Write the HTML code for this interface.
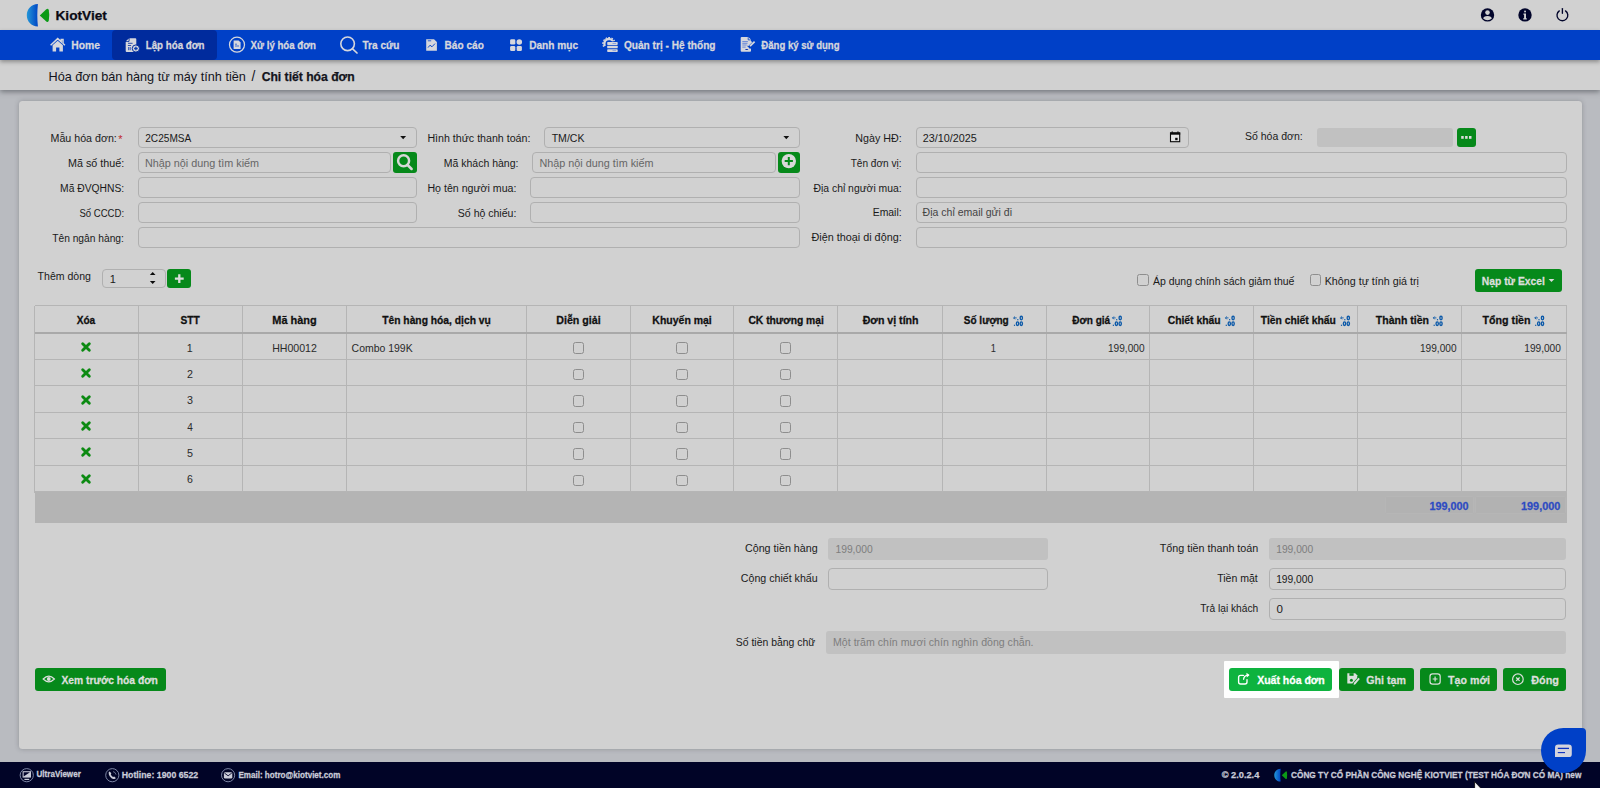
<!DOCTYPE html>
<html lang="vi">
<head>
<meta charset="utf-8">
<title>KiotViet</title>
<style>
*{box-sizing:border-box;margin:0;padding:0}
html,body{width:1600px;height:788px;overflow:hidden}
body{background:#b9bbc0;font-family:"Liberation Sans",sans-serif;font-size:11px;color:#1a1a1a;position:relative}
.a{position:absolute}
#top{left:0;top:0;width:1600px;height:30px;background:#d1d1d1}
#nav{left:0;top:30px;width:1600px;height:30px;background:#0040c7;box-shadow:0 1.5px 4px rgba(30,30,30,.38);z-index:2}
#act{left:112px;top:30px;width:104.5px;height:30px;background:#002b9d;border-radius:4px;z-index:2}
#bc{left:0;top:60px;width:1600px;height:30px;background:#d1d1d1;box-shadow:0 2px 5px rgba(50,54,60,.5)}
#card{left:18.6px;top:100.6px;width:1563.5px;height:648px;background:#d1d1d1;border-radius:3.5px;box-shadow:0 0 5px rgba(40,44,52,.28)}
#foot{left:0;top:762px;width:1600px;height:26px;background:#010427}
.t{position:absolute;white-space:pre;line-height:1;z-index:3}
.inp{position:absolute;height:20px;border:1px solid #b0b0b0;border-radius:4px;background:#d1d1d1}
.dis{position:absolute;border-radius:3px;background:#c1c1c1}
.g{position:absolute;background:#06891a;border-radius:3px}
.cb{position:absolute;width:11.5px;height:11.5px;border:1px solid #8e8e8e;border-radius:2.5px;background:#d1d1d1}
.vl{position:absolute;width:1px;background:#b5b5b5;top:305.5px;height:187px}
.hl{position:absolute;height:1px;background:#b5b5b5;left:34.5px;width:1532px}
svg{position:absolute;overflow:visible;z-index:3}
</style>
</head>
<body>
<div id="top" class="a"></div>
<div id="nav" class="a"></div>
<div id="act" class="a"></div>
<div id="bc" class="a"></div>
<div id="card" class="a"></div>
<div id="foot" class="a"></div>
<div class="inp" style="left:138.25px;top:127.00px;width:278.25px;height:21.00px;"></div>
<div class="inp" style="left:138.25px;top:152.00px;width:252.75px;height:21.00px;"></div>
<div class="inp" style="left:138.25px;top:177.00px;width:278.25px;height:21.00px;"></div>
<div class="inp" style="left:138.25px;top:202.00px;width:278.25px;height:21.00px;"></div>
<div class="inp" style="left:138.25px;top:227.00px;width:661.50px;height:21.00px;"></div>
<div class="inp" style="left:544.25px;top:127.00px;width:255.50px;height:21.00px;"></div>
<div class="inp" style="left:532.25px;top:152.00px;width:243.25px;height:21.00px;"></div>
<div class="inp" style="left:530.25px;top:177.00px;width:269.50px;height:21.00px;"></div>
<div class="inp" style="left:530.25px;top:202.00px;width:269.50px;height:21.00px;"></div>
<div class="inp" style="left:916.25px;top:127.00px;width:272.50px;height:21.00px;"></div>
<div class="inp" style="left:916.25px;top:152.00px;width:650.35px;height:21.00px;"></div>
<div class="inp" style="left:916.25px;top:177.00px;width:650.35px;height:21.00px;"></div>
<div class="inp" style="left:916.25px;top:202.00px;width:650.35px;height:21.00px;"></div>
<div class="inp" style="left:916.25px;top:227.00px;width:650.35px;height:21.00px;"></div>
<div class="dis" style="left:1316.90px;top:127.90px;width:136.30px;height:19.30px;"></div>
<div class="g" style="left:392.75px;top:152.00px;width:23.75px;height:20.50px;"></div>
<div class="g" style="left:777.75px;top:152.00px;width:22.00px;height:20.50px;"></div>
<div class="g" style="left:1456.80px;top:128.00px;width:19.70px;height:18.70px;"></div>
<div class="inp" style="left:102.20px;top:268.50px;width:64.00px;height:19.80px;"></div>
<div class="g" style="left:166.80px;top:268.70px;width:24.50px;height:19.50px;"></div>
<div class="g" style="left:1475.00px;top:268.80px;width:87.30px;height:23.30px;"></div>
<div class="cb" style="left:1137.3px;top:274.2px"></div>
<div class="cb" style="left:1309.5px;top:274.2px"></div>
<div class="a" style="left:34.5px;top:492px;width:1532px;height:30.5px;background:#b4b4b4"></div>
<div class="a" style="left:1384.7px;top:495.8px;width:89.3px;height:18.6px;background:#b2b2b2;border:1px solid #b6b6b6;border-radius:2px"></div>
<div class="a" style="left:1475.2px;top:495.8px;width:91px;height:18.6px;background:#b2b2b2;border:1px solid #b6b6b6;border-radius:2px"></div>
<div class="vl" style="left:34.00px"></div>
<div class="vl" style="left:137.90px"></div>
<div class="vl" style="left:241.80px"></div>
<div class="vl" style="left:345.70px"></div>
<div class="vl" style="left:526.00px"></div>
<div class="vl" style="left:629.70px"></div>
<div class="vl" style="left:733.30px"></div>
<div class="vl" style="left:837.10px"></div>
<div class="vl" style="left:941.70px"></div>
<div class="vl" style="left:1045.90px"></div>
<div class="vl" style="left:1149.30px"></div>
<div class="vl" style="left:1252.90px"></div>
<div class="vl" style="left:1356.90px"></div>
<div class="vl" style="left:1460.90px"></div>
<div class="vl" style="left:1565.70px"></div>
<div class="hl" style="top:305px"></div>
<div class="hl" style="top:331.5px;height:2px;background:#a9a9a9"></div>
<div class="hl" style="top:358.70px"></div>
<div class="hl" style="top:385.10px"></div>
<div class="hl" style="top:411.60px"></div>
<div class="hl" style="top:438.00px"></div>
<div class="hl" style="top:464.50px"></div>
<div class="hl" style="top:491.00px"></div>
<div class="cb" style="left:572.55px;top:342.25px"></div>
<div class="cb" style="left:676.25px;top:342.25px"></div>
<div class="cb" style="left:779.95px;top:342.25px"></div>
<svg style="left:81.40px;top:341.75px" width="10" height="10" viewBox="0 0 10 10"><path d="M1.7 1.8L8.3 8.2M8.3 1.8L1.7 8.2" stroke="#0c8a12" stroke-width="2.9" stroke-linecap="round"/></svg>
<div class="cb" style="left:572.55px;top:368.75px"></div>
<div class="cb" style="left:676.25px;top:368.75px"></div>
<div class="cb" style="left:779.95px;top:368.75px"></div>
<svg style="left:81.40px;top:368.15px" width="10" height="10" viewBox="0 0 10 10"><path d="M1.7 1.8L8.3 8.2M8.3 1.8L1.7 8.2" stroke="#0c8a12" stroke-width="2.9" stroke-linecap="round"/></svg>
<div class="cb" style="left:572.55px;top:395.25px"></div>
<div class="cb" style="left:676.25px;top:395.25px"></div>
<div class="cb" style="left:779.95px;top:395.25px"></div>
<svg style="left:81.40px;top:394.55px" width="10" height="10" viewBox="0 0 10 10"><path d="M1.7 1.8L8.3 8.2M8.3 1.8L1.7 8.2" stroke="#0c8a12" stroke-width="2.9" stroke-linecap="round"/></svg>
<div class="cb" style="left:572.55px;top:421.75px"></div>
<div class="cb" style="left:676.25px;top:421.75px"></div>
<div class="cb" style="left:779.95px;top:421.75px"></div>
<svg style="left:81.40px;top:420.95px" width="10" height="10" viewBox="0 0 10 10"><path d="M1.7 1.8L8.3 8.2M8.3 1.8L1.7 8.2" stroke="#0c8a12" stroke-width="2.9" stroke-linecap="round"/></svg>
<div class="cb" style="left:572.55px;top:448.25px"></div>
<div class="cb" style="left:676.25px;top:448.25px"></div>
<div class="cb" style="left:779.95px;top:448.25px"></div>
<svg style="left:81.40px;top:447.35px" width="10" height="10" viewBox="0 0 10 10"><path d="M1.7 1.8L8.3 8.2M8.3 1.8L1.7 8.2" stroke="#0c8a12" stroke-width="2.9" stroke-linecap="round"/></svg>
<div class="cb" style="left:572.55px;top:474.75px"></div>
<div class="cb" style="left:676.25px;top:474.75px"></div>
<div class="cb" style="left:779.95px;top:474.75px"></div>
<svg style="left:81.40px;top:473.75px" width="10" height="10" viewBox="0 0 10 10"><path d="M1.7 1.8L8.3 8.2M8.3 1.8L1.7 8.2" stroke="#0c8a12" stroke-width="2.9" stroke-linecap="round"/></svg>
<div class="dis" style="left:828.40px;top:538.00px;width:219.80px;height:21.80px;"></div>
<div class="inp" style="left:828.40px;top:568.20px;width:219.80px;height:21.60px;"></div>
<div class="dis" style="left:1269.30px;top:538.00px;width:296.60px;height:22.00px;"></div>
<div class="inp" style="left:1269.30px;top:568.20px;width:296.60px;height:21.80px;"></div>
<div class="inp" style="left:1269.30px;top:598.20px;width:296.60px;height:21.80px;"></div>
<div class="dis" style="left:826.00px;top:631.20px;width:740.00px;height:22.40px;"></div>
<div class="g" style="left:34.50px;top:668.30px;width:131.00px;height:22.70px;"></div>
<div class="a" style="left:1223.5px;top:660.7px;width:115px;height:37.6px;background:#fefefe;border-radius:1px"></div>
<div class="g" style="left:1229.30px;top:668.30px;width:102.70px;height:22.70px;background:#0eb33f"></div>
<div class="g" style="left:1338.80px;top:668.30px;width:75.00px;height:22.70px;"></div>
<div class="g" style="left:1420.20px;top:668.30px;width:77.10px;height:22.70px;"></div>
<div class="g" style="left:1503.40px;top:668.30px;width:63.00px;height:22.70px;"></div>
<!-- logo -->
<svg style="left:0;top:0" width="60" height="30" viewBox="0 0 60 30">
<defs><linearGradient id="lg" x1="0" x2="1" y1="0" y2="0"><stop offset="0" stop-color="#2397d8"/><stop offset="1" stop-color="#0046c4"/></linearGradient></defs>
<path d="M37.9 4.1C31.2 4.3 26.8 9.2 26.8 15.3C26.8 21.4 31.2 26.3 37.9 26.5C37.5 22.6 37.3 19 37.3 15.3C37.3 11.6 37.5 8 37.9 4.1Z" fill="url(#lg)"/>
<path d="M39.8 15.4L46.3 9.3Q48.2 7.8 48.8 10.2Q49.8 15.4 48.8 20.6Q48.2 23 46.3 21.5Z" fill="#0b9a16"/>
</svg>
<!-- top right icons -->
<svg style="left:1478px;top:5px" width="100" height="20" viewBox="1478 5 100 20">
<circle cx="1487.5" cy="14.9" r="6.7" fill="#02052b"/>
<circle cx="1487.5" cy="12.6" r="2.3" fill="#d1d1d1"/>
<path d="M1483.2 18.4Q1483.4 15.9 1487.5 15.9Q1491.6 15.9 1491.8 18.4Q1490 20.2 1487.5 20.2Q1485 20.2 1483.2 18.4Z" fill="#d1d1d1"/>
<circle cx="1525" cy="14.9" r="6.7" fill="#02052b"/>
<rect x="1524.1" y="10.5" width="1.9" height="1.9" rx=".9" fill="#d1d1d1"/>
<path d="M1523.4 13.6h2.6v4.6h.8v1.2h-3.6v-1.2h.9v-3.4h-.7z" fill="#d1d1d1"/>
<path d="M1559.3 10.9A5.4 5.4 0 1 0 1565.5 10.9" fill="none" stroke="#02052b" stroke-width="1.35" stroke-linecap="round"/>
<path d="M1562.4 8.6V13.2" stroke="#02052b" stroke-width="1.35" stroke-linecap="round"/>
</svg>
<!-- nav icons -->
<svg style="left:0;top:30px" width="860" height="30" viewBox="0 30 860 30" fill="#d6d7dd">
<!-- home -->
<path d="M50.6 45.2L57.7 38.6L61.2 41.8V39.6H63V43.5L64.9 45.2" fill="none" stroke="#d6d7dd" stroke-width="1.5" stroke-linejoin="miter"/>
<path d="M52.6 45.3L57.7 40.7L62.9 45.3V51.6H59.4V47.6H56.1V51.6H52.6Z"/>
<!-- lap hoa don -->
<path d="M129.5 38.2H135.3Q136.3 38.2 136.3 39.2V51.9H126.7Q125.7 51.9 125.7 50.9V42H128Q129.5 42 129.5 40.5Z"/>
<path d="M125.9 41.2L128.7 38.4V40.4Q128.7 41.2 127.9 41.2Z"/>
<path d="M128 43.3h4.6M127.9 45.5h3.2" stroke="#002b9d" stroke-width=".8" fill="none"/>
<rect x="128" y="47" width="1.5" height="3.2" fill="#4a68bd"/><rect x="130.2" y="47" width=".9" height="3.2" fill="#4a68bd"/>
<circle cx="135.9" cy="48.5" r="3.6" fill="#d6d7dd" stroke="#002b9d" stroke-width="1"/>
<path d="M135.9 46.7v3.6M134.1 48.5h3.6" stroke="#0a3cb0" stroke-width="1.3"/>
<!-- xu ly -->
<circle cx="237" cy="44.7" r="7.5" fill="none" stroke="#d6d7dd" stroke-width="1.25"/>
<path d="M233.6 40.6H238.6L240.6 42.6V49H233.6Z"/>
<path d="M235 44.2h2M235 46h4" stroke="#0040c7" stroke-width=".7"/>
<!-- tra cuu -->
<circle cx="347.6" cy="43.8" r="6.8" fill="none" stroke="#d6d7dd" stroke-width="1.6"/>
<path d="M352.6 48.8L357 53" stroke="#d6d7dd" stroke-width="1.7" stroke-linecap="round"/>
<!-- bao cao -->
<path d="M426.2 39.2H434L436.9 42.1V50.8H426.2Z"/>
<path d="M428 47.6L430 45.2L432 46.8L435 43.6" fill="none" stroke="#0040c7" stroke-width=".9"/>
<path d="M427.8 40.8h3.4" stroke="#0040c7" stroke-width=".8"/>
<!-- danh muc -->
<rect x="510.1" y="39.3" width="5.2" height="5.2" rx="1.3"/>
<circle cx="519.3" cy="41.9" r="2.75"/>
<rect x="510.1" y="45.9" width="5.2" height="5.2" rx="1.3"/>
<rect x="516.7" y="45.9" width="5.2" height="5.2" rx="1.3"/>
<!-- quan tri -->
<path d="M604.93 46.05A4.7 4.7 0 1 1 613.26 41.71" fill="none" stroke="#d6d7dd" stroke-width="2.3"/>
<path d="M603.72 46.75A6.1 6.1 0 1 1 614.53 41.12" fill="none" stroke="#d6d7dd" stroke-width="1.3" stroke-dasharray="1.7 1.25"/>
<rect x="606.4" y="41.4" width="12" height="11.2" fill="#0040c7"/>
<rect x="607.2" y="42.1" width="10.5" height="2.8" rx=".7"/>
<rect x="607.2" y="45.8" width="10.5" height="2.5" rx=".5"/>
<rect x="607.2" y="49.2" width="10.5" height="2.7" rx=".7"/>
<path d="M612.5 43.5h3.6M612.5 50.6h3.6" stroke="#6f8fdc" stroke-width=".7"/>
<!-- dang ky -->
<path d="M741.7 36.9H748.3L751 39.6V50.7Q751 51.7 750 51.7H741.7Q740.7 51.7 740.7 50.7V37.9Q740.7 36.9 741.7 36.9Z"/>
<path d="M748.2 37.2V39.9H750.8" fill="none" stroke="#0040c7" stroke-width=".8"/>
<path d="M742.3 41.6h5.6M742.3 43.3h5.2M742.3 45h4.4M742.3 47.1h3.4" stroke="#6888d8" stroke-width="1"/>
<ellipse cx="746.7" cy="49.5" rx="1.6" ry=".55" fill="#0a2fb0"/>
<path d="M755 41.3L748.6 47.6" stroke="#0040c7" stroke-width="4.2"/>
<path d="M754.6 41.6L750 46.2" stroke="#d6d7dd" stroke-width="1.7"/>
<path d="M751.6 41.6L747.6 45.6" stroke="#d6d7dd" stroke-width="1.5"/>
</svg>
<!-- carets, calendar, spinner -->
<svg style="left:0;top:120px" width="1600" height="180" viewBox="0 120 1600 180">
<path d="M400.2 136H406.1L403.15 139.2Z" fill="#111"/>
<path d="M783.4 136H789.2L786.3 139.2Z" fill="#111"/>
<rect x="1170.5" y="133" width="9.2" height="8.7" fill="#e4e4e4" stroke="#0a0a0a" stroke-width="1.1"/>
<rect x="1170" y="132.4" width="10.2" height="2.3" fill="#0a0a0a"/>
<rect x="1171.6" y="131.5" width="1.3" height="1.2" fill="#0a0a0a"/><rect x="1177.3" y="131.5" width="1.3" height="1.2" fill="#0a0a0a"/>
<rect x="1175.2" y="137.8" width="2.4" height="2.4" fill="#0a0a0a"/>
<path d="M149.9 275.1H155.5L152.7 272.1Z" fill="#0a0a0a"/>
<path d="M149.9 281H155.5L152.7 283.9Z" fill="#0a0a0a"/>
<!-- search btn -->
<circle cx="403.6" cy="160.8" r="5.5" fill="none" stroke="#d8d8d8" stroke-width="2.5"/>
<path d="M407.6 165L411.6 169" stroke="#d8d8d8" stroke-width="2.5" stroke-linecap="round"/>
<!-- plus circle btn -->
<circle cx="788.8" cy="161.1" r="7.2" fill="#d8d8d8"/>
<path d="M788.8 157v8.2M784.7 161.1h8.2" stroke="#06891a" stroke-width="2"/>
<!-- ... btn -->
<rect x="1461.2" y="136" width="2.5" height="2.8" fill="#dcdcdc"/><rect x="1465.1" y="136" width="2.5" height="2.8" fill="#dcdcdc"/><rect x="1469" y="136" width="2.5" height="2.8" fill="#dcdcdc"/>
<!-- plus btn -->
<path d="M179.3 274.2v8.8M174.9 278.6h8.8" stroke="#dcdcdc" stroke-width="2.3"/>
<!-- excel caret -->
<path d="M1548.6 279H1554.4L1551.5 282Z" fill="#dcdcdc"/>
</svg>
<!-- decimal icons -->
<svg style="left:0;top:310px" width="1600" height="20" viewBox="0 310 1600 20">

<g fill="none" stroke="#0a58a8" transform="translate(1013.4 315.6)">
<path d="M0.2 2.3H3.3M1.6 0.9L0.2 2.3L1.6 3.7" stroke-width=".9"/>
<rect x="3.8" y="3.5" width="1.2" height="1.2" fill="#0a58a8" stroke="none"/>
<ellipse cx="7.9" cy="2.4" rx="1.15" ry="1.8" stroke-width="1.35"/>
<rect x="0.5" y="9.1" width="1.2" height="1.2" fill="#0a58a8" stroke="none"/>
<ellipse cx="4.1" cy="8.1" rx="1.15" ry="1.8" stroke-width="1.35"/>
<ellipse cx="7.9" cy="8.1" rx="1.15" ry="1.8" stroke-width="1.35"/>
</g>
<g fill="none" stroke="#0a58a8" transform="translate(1112.3 315.6)">
<path d="M0.2 2.3H3.3M1.6 0.9L0.2 2.3L1.6 3.7" stroke-width=".9"/>
<rect x="3.8" y="3.5" width="1.2" height="1.2" fill="#0a58a8" stroke="none"/>
<ellipse cx="7.9" cy="2.4" rx="1.15" ry="1.8" stroke-width="1.35"/>
<rect x="0.5" y="9.1" width="1.2" height="1.2" fill="#0a58a8" stroke="none"/>
<ellipse cx="4.1" cy="8.1" rx="1.15" ry="1.8" stroke-width="1.35"/>
<ellipse cx="7.9" cy="8.1" rx="1.15" ry="1.8" stroke-width="1.35"/>
</g>
<g fill="none" stroke="#0a58a8" transform="translate(1225.2 315.6)">
<path d="M0.2 2.3H3.3M1.6 0.9L0.2 2.3L1.6 3.7" stroke-width=".9"/>
<rect x="3.8" y="3.5" width="1.2" height="1.2" fill="#0a58a8" stroke="none"/>
<ellipse cx="7.9" cy="2.4" rx="1.15" ry="1.8" stroke-width="1.35"/>
<rect x="0.5" y="9.1" width="1.2" height="1.2" fill="#0a58a8" stroke="none"/>
<ellipse cx="4.1" cy="8.1" rx="1.15" ry="1.8" stroke-width="1.35"/>
<ellipse cx="7.9" cy="8.1" rx="1.15" ry="1.8" stroke-width="1.35"/>
</g>
<g fill="none" stroke="#0a58a8" transform="translate(1340.4 315.6)">
<path d="M0.2 2.3H3.3M1.6 0.9L0.2 2.3L1.6 3.7" stroke-width=".9"/>
<rect x="3.8" y="3.5" width="1.2" height="1.2" fill="#0a58a8" stroke="none"/>
<ellipse cx="7.9" cy="2.4" rx="1.15" ry="1.8" stroke-width="1.35"/>
<rect x="0.5" y="9.1" width="1.2" height="1.2" fill="#0a58a8" stroke="none"/>
<ellipse cx="4.1" cy="8.1" rx="1.15" ry="1.8" stroke-width="1.35"/>
<ellipse cx="7.9" cy="8.1" rx="1.15" ry="1.8" stroke-width="1.35"/>
</g>
<g fill="none" stroke="#0a58a8" transform="translate(1433.1 315.6)">
<path d="M0.2 2.3H3.3M1.6 0.9L0.2 2.3L1.6 3.7" stroke-width=".9"/>
<rect x="3.8" y="3.5" width="1.2" height="1.2" fill="#0a58a8" stroke="none"/>
<ellipse cx="7.9" cy="2.4" rx="1.15" ry="1.8" stroke-width="1.35"/>
<rect x="0.5" y="9.1" width="1.2" height="1.2" fill="#0a58a8" stroke="none"/>
<ellipse cx="4.1" cy="8.1" rx="1.15" ry="1.8" stroke-width="1.35"/>
<ellipse cx="7.9" cy="8.1" rx="1.15" ry="1.8" stroke-width="1.35"/>
</g>
<g fill="none" stroke="#0a58a8" transform="translate(1534.6 315.6)">
<path d="M0.2 2.3H3.3M1.6 0.9L0.2 2.3L1.6 3.7" stroke-width=".9"/>
<rect x="3.8" y="3.5" width="1.2" height="1.2" fill="#0a58a8" stroke="none"/>
<ellipse cx="7.9" cy="2.4" rx="1.15" ry="1.8" stroke-width="1.35"/>
<rect x="0.5" y="9.1" width="1.2" height="1.2" fill="#0a58a8" stroke="none"/>
<ellipse cx="4.1" cy="8.1" rx="1.15" ry="1.8" stroke-width="1.35"/>
<ellipse cx="7.9" cy="8.1" rx="1.15" ry="1.8" stroke-width="1.35"/>
</g>
</svg>
<!-- button icons -->
<svg style="left:0;top:665px" width="1600" height="30" viewBox="0 665 1600 30" fill="none">
<!-- eye -->
<path d="M43.2 679Q48.8 673.4 54.4 679Q48.8 684.6 43.2 679Z" stroke="#dcdfdc" stroke-width="1.25"/>
<circle cx="48.8" cy="679" r="1.9" fill="#dcdfdc"/>
<!-- xuat -->
<path d="M1243.4 675.4H1240.6Q1238.6 675.4 1238.6 677.4V682Q1238.6 684 1240.6 684H1245Q1247 684 1247 682V679.6" stroke="#fff" stroke-width="1.35" stroke-linecap="round"/>
<path d="M1243.6 679.2Q1244 675.6 1248.2 675.2" stroke="#fff" stroke-width="1.35" stroke-linecap="round"/>
<path d="M1246.4 672.8L1249.6 675L1246.8 677.6Z" fill="#fff"/>
<!-- ghi tam -->
<path d="M1347.3 673.2H1355.2L1357.2 675.2V678L1352.4 683.6H1347.3Z" fill="#dcdfdc"/>
<rect x="1349.4" y="673.2" width="4.2" height="2.6" fill="#06891a"/>
<circle cx="1351.4" cy="680.2" r="1.5" fill="#06891a"/>
<path d="M1353.6 684.9L1354 682.8L1358.4 677.8L1359.8 679L1355.4 684.2Z" fill="#dcdfdc"/>
<!-- tao moi -->
<rect x="1430" y="673.9" width="10.2" height="10.2" rx="2.6" stroke="#dcdfdc" stroke-width="1.2"/>
<path d="M1435.1 676.6v4.8M1432.7 679h4.8" stroke="#dcdfdc" stroke-width="1.2"/>
<!-- dong -->
<circle cx="1517.9" cy="679.2" r="5.3" stroke="#dcdfdc" stroke-width="1.2"/>
<path d="M1516.2 677.5l3.4 3.4M1519.6 677.5l-3.4 3.4" stroke="#dcdfdc" stroke-width="1.3"/>
</svg>
<!-- footer icons -->
<svg style="left:0;top:762px" width="1600" height="26" viewBox="0 762 1600 26" fill="none">
<g stroke="#7d86a5" stroke-width="1">
<circle cx="26.75" cy="775.2" r="6.6"/><circle cx="112.3" cy="775.2" r="6.6"/><circle cx="228.1" cy="775.2" r="6.6"/>
</g>
<path d="M22.6 771.2H31V777.6H22.6Z" fill="#c9cbd8"/><path d="M23.6 776.6L30 772.2H23.6Z" fill="#02032a"/><path d="M24.4 779.4H29.2" stroke="#c9cbd8" stroke-width="1.2"/>
<path d="M109.6 771.6Q108.2 772 108.8 774.2Q110 778 113.4 779Q115.4 779.4 115.8 778L114.2 776.4L113 777Q111.2 776 110.8 774.2L111.4 773.2Z" fill="#c9cbd8"/>
<path d="M113 771.6Q115.6 772 116 774.6" stroke="#7d86a5" stroke-width=".8"/>
<rect x="223.9" y="772.2" width="8.4" height="6.2" rx="1.2" fill="#c9cbd8"/><path d="M224.4 773L228.1 775.8L231.8 773" stroke="#02032a" stroke-width=".9"/>
<g transform="translate(1258.85 766.35) scale(.575)">
<path d="M37.9 4.1C31.2 4.3 26.8 9.2 26.8 15.3C26.8 21.4 31.2 26.3 37.9 26.5C37.5 22.6 37.3 19 37.3 15.3C37.3 11.6 37.5 8 37.9 4.1Z" fill="url(#lg)"/>
<path d="M39.8 15.4L46.3 9.3Q48.2 7.8 48.8 10.2Q49.8 15.4 48.8 20.6Q48.2 23 46.3 21.5Z" fill="#0b9a16"/>
</g>
</svg>

<span class="t" style="left:55.44px;top:9.46px;font-size:13.69px;color:#0a0a14;font-weight:700;-webkit-text-stroke:.25px;">KiotViet</span>
<span class="t" style="left:71.34px;top:40.52px;font-size:10.35px;color:#d6d7dd;font-weight:700;-webkit-text-stroke:.25px;transform:scaleY(1.053);">Home</span>
<span class="t" style="left:145.79px;top:40.84px;font-size:9.72px;color:#d6d7dd;font-weight:700;-webkit-text-stroke:.25px;transform:scaleY(1.122);">Lập hóa đơn</span>
<span class="t" style="left:250.60px;top:40.87px;font-size:9.67px;color:#d6d7dd;font-weight:700;-webkit-text-stroke:.25px;transform:scaleY(1.127);">Xử lý hóa đơn</span>
<span class="t" style="left:362.52px;top:40.66px;font-size:10.07px;color:#d6d7dd;font-weight:700;-webkit-text-stroke:.25px;transform:scaleY(1.082);">Tra cứu</span>
<span class="t" style="left:444.59px;top:40.65px;font-size:10.11px;color:#d6d7dd;font-weight:700;-webkit-text-stroke:.25px;transform:scaleY(1.079);">Báo cáo</span>
<span class="t" style="left:529.19px;top:40.64px;font-size:10.12px;color:#d6d7dd;font-weight:700;-webkit-text-stroke:.25px;transform:scaleY(1.077);">Danh mục</span>
<span class="t" style="left:623.89px;top:40.63px;font-size:10.13px;color:#d6d7dd;font-weight:700;-webkit-text-stroke:.25px;transform:scaleY(1.076);">Quản trị - Hệ thống</span>
<span class="t" style="left:761.30px;top:40.91px;font-size:9.59px;color:#d6d7dd;font-weight:700;-webkit-text-stroke:.25px;transform:scaleY(1.137);">Đăng ký sử dụng</span>
<span class="t" style="left:48.48px;top:71.45px;font-size:12.70px;color:#14141c;">Hóa đơn bán hàng từ máy tính tiền</span>
<span class="t" style="left:251.58px;top:69.93px;font-size:13.74px;color:#14141c;">/</span>
<span class="t" style="left:261.64px;top:70.72px;font-size:12.17px;color:#14141c;font-weight:700;-webkit-text-stroke:.25px;">Chi tiết hóa đơn</span>
<span class="t" style="left:50.55px;top:132.87px;font-size:10.66px;color:#1a1a1a;transform:scaleY(1.091);">Mẫu hóa đơn:</span>
<span class="t" style="left:118.37px;top:134.00px;font-size:11.00px;color:#c0282d;letter-spacing:2.077px;transform:scaleY(1.057);">*</span>
<span class="t" style="left:68.08px;top:157.63px;font-size:10.74px;color:#1a1a1a;transform:scaleY(1.083);">Mã số thuế:</span>
<span class="t" style="left:60.10px;top:183.85px;font-size:10.30px;color:#1a1a1a;transform:scaleY(1.129);">Mã ĐVQHNS:</span>
<span class="t" style="left:79.47px;top:208.22px;font-size:9.55px;color:#1a1a1a;transform:scaleY(1.217);">Số CCCD:</span>
<span class="t" style="left:52.19px;top:234.38px;font-size:10.24px;color:#1a1a1a;transform:scaleY(1.136);">Tên ngân hàng:</span>
<span class="t" style="left:145.25px;top:134.25px;font-size:10.10px;color:#1a1a1a;transform:scaleY(1.151);">2C25MSA</span>
<span class="t" style="left:144.93px;top:157.79px;font-size:10.82px;color:#666;transform:scaleY(1.074);">Nhập nội dung tìm kiếm</span>
<span class="t" style="left:427.45px;top:132.87px;font-size:10.65px;color:#1a1a1a;transform:scaleY(1.092);">Hình thức thanh toán:</span>
<span class="t" style="left:443.77px;top:158.75px;font-size:10.49px;color:#1a1a1a;transform:scaleY(1.108);">Mã khách hàng:</span>
<span class="t" style="left:427.45px;top:182.69px;font-size:10.62px;color:#1a1a1a;transform:scaleY(1.095);">Họ tên người mua:</span>
<span class="t" style="left:457.87px;top:207.73px;font-size:10.53px;color:#1a1a1a;transform:scaleY(1.104);">Số hộ chiếu:</span>
<span class="t" style="left:551.67px;top:133.02px;font-size:10.55px;color:#1a1a1a;transform:scaleY(1.102);">TM/CK</span>
<span class="t" style="left:539.44px;top:157.80px;font-size:10.81px;color:#666;transform:scaleY(1.076);">Nhập nội dung tìm kiếm</span>
<span class="t" style="left:855.34px;top:132.84px;font-size:10.71px;color:#1a1a1a;transform:scaleY(1.085);">Ngày HĐ:</span>
<span class="t" style="left:850.64px;top:158.94px;font-size:10.12px;color:#1a1a1a;transform:scaleY(1.149);">Tên đơn vị:</span>
<span class="t" style="left:813.52px;top:183.81px;font-size:10.38px;color:#1a1a1a;transform:scaleY(1.120);">Địa chỉ người mua:</span>
<span class="t" style="left:872.73px;top:208.29px;font-size:10.42px;color:#1a1a1a;transform:scaleY(1.116);">Email:</span>
<span class="t" style="left:811.51px;top:232.09px;font-size:10.82px;color:#1a1a1a;transform:scaleY(1.075);">Điện thoại di động:</span>
<span class="t" style="left:922.82px;top:132.90px;font-size:10.80px;color:#1a1a1a;transform:scaleY(1.076);">23/10/2025</span>
<span class="t" style="left:922.62px;top:207.24px;font-size:10.53px;color:#444;transform:scaleY(1.104);">Địa chỉ email gửi đi</span>
<span class="t" style="left:1244.97px;top:131.25px;font-size:10.50px;color:#1a1a1a;transform:scaleY(1.107);">Số hóa đơn:</span>
<span class="t" style="left:37.61px;top:271.22px;font-size:10.56px;color:#1a1a1a;transform:scaleY(1.101);">Thêm dòng</span>
<span class="t" style="left:109.64px;top:274.00px;font-size:11.00px;color:#1a1a1a;letter-spacing:-4.086px;transform:scaleY(1.057);">1</span>
<span class="t" style="left:1152.98px;top:276.96px;font-size:10.48px;color:#1a1a1a;transform:scaleY(1.109);">Áp dụng chính sách giảm thuế</span>
<span class="t" style="left:1324.67px;top:275.83px;font-size:10.74px;color:#1a1a1a;transform:scaleY(1.082);">Không tự tính giá trị</span>
<span class="t" style="left:1481.82px;top:276.64px;font-size:10.32px;color:#dcdfdc;font-weight:700;-webkit-text-stroke:.25px;transform:scaleY(1.127);">Nạp từ Excel</span>
<span class="t" style="left:76.74px;top:315.76px;font-size:10.09px;color:#101010;font-weight:700;-webkit-text-stroke:.25px;transform:scaleY(1.153);">Xóa</span>
<span class="t" style="left:180.55px;top:315.68px;font-size:10.23px;color:#101010;font-weight:700;-webkit-text-stroke:.25px;transform:scaleY(1.136);">STT</span>
<span class="t" style="left:272.33px;top:315.33px;font-size:10.94px;color:#101010;font-weight:700;-webkit-text-stroke:.25px;transform:scaleY(1.063);">Mã hàng</span>
<span class="t" style="left:382.24px;top:315.65px;font-size:10.29px;color:#101010;font-weight:700;-webkit-text-stroke:.25px;transform:scaleY(1.130);">Tên hàng hóa, dịch vụ</span>
<span class="t" style="left:556.28px;top:315.47px;font-size:10.66px;color:#101010;font-weight:700;-webkit-text-stroke:.25px;transform:scaleY(1.091);">Diễn giải</span>
<span class="t" style="left:652.36px;top:315.55px;font-size:10.49px;color:#101010;font-weight:700;-webkit-text-stroke:.25px;transform:scaleY(1.108);">Khuyến mại</span>
<span class="t" style="left:748.41px;top:315.64px;font-size:10.31px;color:#101010;font-weight:700;-webkit-text-stroke:.25px;transform:scaleY(1.127);">CK thương mại</span>
<span class="t" style="left:862.68px;top:315.49px;font-size:10.62px;color:#101010;font-weight:700;-webkit-text-stroke:.25px;transform:scaleY(1.095);">Đơn vị tính</span>
<span class="t" style="left:963.78px;top:315.79px;font-size:10.03px;color:#101010;font-weight:700;-webkit-text-stroke:.25px;transform:scaleY(1.160);">Số lượng</span>
<span class="t" style="left:1072.32px;top:315.77px;font-size:10.06px;color:#101010;font-weight:700;-webkit-text-stroke:.25px;transform:scaleY(1.156);">Đơn giá</span>
<span class="t" style="left:1167.71px;top:315.62px;font-size:10.35px;color:#101010;font-weight:700;-webkit-text-stroke:.25px;transform:scaleY(1.123);">Chiết khấu</span>
<span class="t" style="left:1260.79px;top:315.63px;font-size:10.34px;color:#101010;font-weight:700;-webkit-text-stroke:.25px;transform:scaleY(1.124);">Tiền chiết khấu</span>
<span class="t" style="left:1375.86px;top:314.54px;font-size:10.52px;color:#101010;font-weight:700;-webkit-text-stroke:.25px;transform:scaleY(1.106);">Thành tiền</span>
<span class="t" style="left:1482.60px;top:315.46px;font-size:10.67px;color:#101010;font-weight:700;-webkit-text-stroke:.25px;transform:scaleY(1.090);">Tổng tiền</span>
<span class="t" style="left:186.72px;top:343.24px;font-size:10.72px;color:#2a2a2a;transform:scaleY(1.085);">1</span>
<span class="t" style="left:187.02px;top:368.59px;font-size:10.72px;color:#2a2a2a;transform:scaleY(1.085);">2</span>
<span class="t" style="left:187.06px;top:394.94px;font-size:10.72px;color:#2a2a2a;transform:scaleY(1.085);">3</span>
<span class="t" style="left:187.32px;top:422.65px;font-size:10.01px;color:#2a2a2a;transform:scaleY(1.162);">4</span>
<span class="t" style="left:187.08px;top:447.64px;font-size:10.72px;color:#2a2a2a;transform:scaleY(1.085);">5</span>
<span class="t" style="left:187.12px;top:474.08px;font-size:10.54px;color:#2a2a2a;transform:scaleY(1.103);">6</span>
<span class="t" style="left:272.16px;top:343.30px;font-size:10.59px;color:#2a2a2a;transform:scaleY(1.098);">HH00012</span>
<span class="t" style="left:351.60px;top:344.37px;font-size:10.46px;color:#2a2a2a;transform:scaleY(1.112);">Combo 199K</span>
<span class="t" style="left:990.83px;top:343.96px;font-size:9.27px;color:#2a2a2a;transform:scaleY(1.250);">1</span>
<span class="t" style="left:1108.00px;top:343.54px;font-size:10.12px;color:#2a2a2a;transform:scaleY(1.148);">199,000</span>
<span class="t" style="left:1420.00px;top:343.54px;font-size:10.12px;color:#2a2a2a;transform:scaleY(1.148);">199,000</span>
<span class="t" style="left:1524.26px;top:343.54px;font-size:10.13px;color:#2a2a2a;transform:scaleY(1.148);">199,000</span>
<span class="t" style="left:1429.48px;top:500.78px;font-size:10.83px;color:#2d4bc2;font-weight:700;-webkit-text-stroke:.25px;transform:scaleY(1.033);">199,000</span>
<span class="t" style="left:1520.95px;top:500.73px;font-size:10.93px;color:#2d4bc2;font-weight:700;-webkit-text-stroke:.25px;transform:scaleY(1.024);">199,000</span>
<span class="t" style="left:744.96px;top:542.93px;font-size:10.73px;color:#1a1a1a;transform:scaleY(1.083);">Cộng tiền hàng</span>
<span class="t" style="left:740.80px;top:572.98px;font-size:10.65px;color:#1a1a1a;transform:scaleY(1.092);">Cộng chiết khấu</span>
<span class="t" style="left:735.82px;top:637.58px;font-size:10.43px;color:#1a1a1a;transform:scaleY(1.114);">Số tiền bằng chữ</span>
<span class="t" style="left:835.43px;top:545.05px;font-size:10.31px;color:#7e7e7e;transform:scaleY(1.128);">199,000</span>
<span class="t" style="left:833.07px;top:637.21px;font-size:10.58px;color:#7e7e7e;transform:scaleY(1.100);">Một trăm chín mươi chín nghìn đồng chẵn.</span>
<span class="t" style="left:1159.66px;top:542.92px;font-size:10.76px;color:#1a1a1a;transform:scaleY(1.081);">Tổng tiền thanh toán</span>
<span class="t" style="left:1217.17px;top:573.03px;font-size:10.55px;color:#1a1a1a;transform:scaleY(1.102);">Tiền mặt</span>
<span class="t" style="left:1200.21px;top:604.20px;font-size:10.21px;color:#1a1a1a;transform:scaleY(1.139);">Trả lại khách</span>
<span class="t" style="left:1276.20px;top:545.08px;font-size:10.25px;color:#7e7e7e;transform:scaleY(1.135);">199,000</span>
<span class="t" style="left:1276.14px;top:575.06px;font-size:10.27px;color:#1a1a1a;transform:scaleY(1.132);">199,000</span>
<span class="t" style="left:1276.44px;top:604.43px;font-size:11.54px;color:#1a1a1a;">0</span>
<span class="t" style="left:61.39px;top:675.65px;font-size:10.30px;color:#dcdfdc;font-weight:700;-webkit-text-stroke:.25px;transform:scaleY(1.129);">Xem trước hóa đơn</span>
<span class="t" style="left:1257.13px;top:674.53px;font-size:10.53px;color:#ffffff;font-weight:700;-webkit-text-stroke:.25px;transform:scaleY(1.104);">Xuất hóa đơn</span>
<span class="t" style="left:1366.32px;top:675.49px;font-size:10.63px;color:#dcdfdc;font-weight:700;-webkit-text-stroke:.25px;transform:scaleY(1.094);">Ghi tạm</span>
<span class="t" style="left:1448.11px;top:675.48px;font-size:10.63px;color:#dcdfdc;font-weight:700;-webkit-text-stroke:.25px;transform:scaleY(1.094);">Tạo mới</span>
<span class="t" style="left:1531.20px;top:675.36px;font-size:10.87px;color:#dcdfdc;font-weight:700;-webkit-text-stroke:.25px;transform:scaleY(1.070);">Đóng</span>
<span class="t" style="left:36.56px;top:771.16px;font-size:8.07px;color:#c9cbd8;font-weight:700;-webkit-text-stroke:.25px;transform:scaleY(1.135);">UltraViewer</span>
<span class="t" style="left:121.80px;top:770.62px;font-size:8.75px;color:#c9cbd8;font-weight:700;-webkit-text-stroke:.25px;transform:scaleY(1.046);">Hotline: 1900 6522</span>
<span class="t" style="left:238.43px;top:771.96px;font-size:8.07px;color:#c9cbd8;font-weight:700;-webkit-text-stroke:.25px;transform:scaleY(1.135);">Email: hotro@kiotviet.com</span>
<span class="t" style="left:1221.77px;top:770.99px;font-size:9.22px;color:#c9cbd8;font-weight:700;-webkit-text-stroke:.25px;">© 2.0.2.4</span>
<span class="t" style="left:1290.99px;top:772.47px;font-size:8.27px;color:#c9cbd8;font-weight:700;-webkit-text-stroke:.25px;transform:scaleY(1.108);">CÔNG TY CỔ PHẦN CÔNG NGHỆ KIOTVIET (TEST HÓA ĐƠN CÓ MÃ) new</span>
<div class="a" style="left:1541px;top:727.8px;width:44.9px;height:44.8px;background:#0040c7;border-radius:22.4px 4px 22.4px 22.4px;z-index:5"></div>
<svg style="left:1550px;top:740px;z-index:6" width="30" height="24" viewBox="1550 740 30 24">
<path d="M1558.2 744.6H1568.6Q1571.8 744.6 1571.8 747.8V753.9Q1571.8 757.1 1568.6 757.1H1555V747.8Q1555 744.6 1558.2 744.6Z" fill="#d4d4dc"/>
<path d="M1557.8 748.4H1569" stroke="#0a2fc0" stroke-width="1.3"/><path d="M1557.8 752.6H1565" stroke="#0a2fc0" stroke-width="1.1"/>
</svg>
<svg style="left:1470px;top:778px;z-index:7" width="20" height="10" viewBox="1470 778 20 10">
<path d="M1474.6 781.6V790H1482.6Z" fill="#f4f4f4" stroke="#111" stroke-width=".9"/>
</svg>
</body>
</html>
